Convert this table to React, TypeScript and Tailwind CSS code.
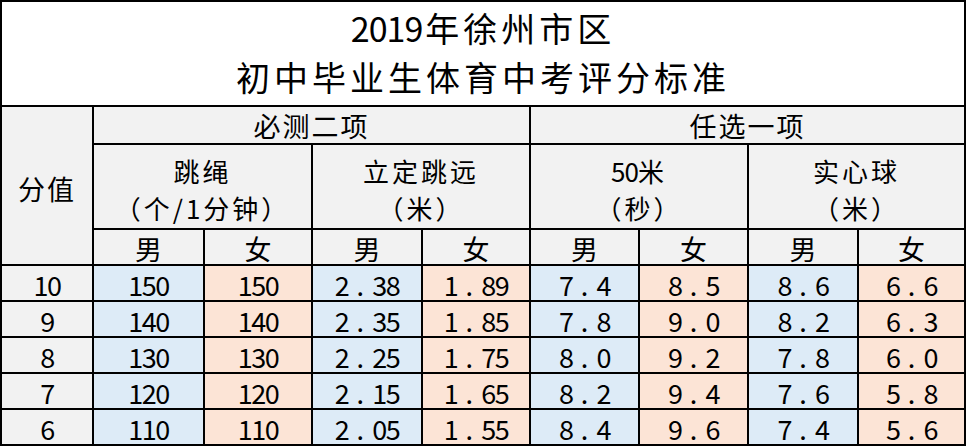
import React from 'react';

const rows = [
  { score: '10', vals: ['150', '150', '2.38', '1.89', '7.4', '8.5', '8.6', '6.6'] },
  { score: '9', vals: ['140', '140', '2.35', '1.85', '7.8', '9.0', '8.2', '6.3'] },
  { score: '8', vals: ['130', '130', '2.25', '1.75', '8.0', '9.2', '7.8', '6.0'] },
  { score: '7', vals: ['120', '120', '2.15', '1.65', '8.2', '9.4', '7.6', '5.8'] },
  { score: '6', vals: ['110', '110', '2.05', '1.55', '8.4', '9.6', '7.4', '5.6'] },
];

const cell = 'border-2 border-black text-center align-middle p-0';
const head = `${cell} bg-[#f2f2f2]`;

function Num({ v }: { v: string }) {
  const [a, b] = v.split('.');
  return (
    <span className="tracking-[-1.5px] whitespace-nowrap">
      {a}
      {b !== undefined && (
        <>
          <span className="inline-block w-[24px] text-center tracking-normal">.</span>
          {b}
        </>
      )}
    </span>
  );
}

function TwoLine({ top, bottom }: { top: React.ReactNode; bottom: string }) {
  return (
    <>
      <div className="leading-[37px] text-[26px] pt-[4px]">{top}</div>
      <div className="leading-[37px] text-[26px]">{bottom}</div>
    </>
  );
}

export default function App() {
  return (
    <div className="w-[967px] h-[447px] bg-white text-black" style={{ fontFamily: '"Noto Sans CJK SC", "Noto Sans", sans-serif' }}>
      <table className="table-fixed border-collapse w-[964px] text-[27px] leading-none">
        <colgroup>
          <col className="w-[92px]" />
          <col className="w-[111px]" />
          <col className="w-[108px]" />
          <col className="w-[110px]" />
          <col className="w-[108px]" />
          <col className="w-[109px]" />
          <col className="w-[109px]" />
          <col className="w-[110px]" />
          <col className="w-[107px]" />
        </colgroup>
        <tbody>
          <tr className="h-[104px]">
            <td colSpan={9} className={`${cell} bg-white text-[34px] tracking-[4px]`}>
              <div className="leading-[49px] pt-[1px]">
                <span className="tracking-[-1px] mr-[3px]">2019</span>年徐州市区
              </div>
              <div className="leading-[49px] pb-[4px]">初中毕业生体育中考评分标准</div>
            </td>
          </tr>
          <tr className="h-[38px]">
            <td rowSpan={3} className={`${head} tracking-[2px] pt-[6px]`}>分值</td>
            <td colSpan={4} className={`${head} tracking-[2px]`}>必测二项</td>
            <td colSpan={4} className={`${head} tracking-[2px]`}>任选一项</td>
          </tr>
          <tr className="h-[85px]">
            <td colSpan={2} className={`${head} tracking-[3px]`}>
              <TwoLine top="跳绳" bottom="（个/1分钟）" />
            </td>
            <td colSpan={2} className={`${head} tracking-[3px]`}>
              <TwoLine top="立定跳远" bottom="（米）" />
            </td>
            <td colSpan={2} className={`${head} tracking-[3px]`}>
              <TwoLine top={<><span className="tracking-[-1px]">50</span>米</>} bottom="（秒）" />
            </td>
            <td colSpan={2} className={`${head} tracking-[3px]`}>
              <TwoLine top="实心球" bottom="（米）" />
            </td>
          </tr>
          <tr className="h-[36px]">
            {['男', '女', '男', '女', '男', '女', '男', '女'].map((g, i) => (
              <td key={i} className={`${head} pt-[3px]`}>{g}</td>
            ))}
          </tr>
          {rows.map(r => (
            <tr key={r.score} className="h-[36px]">
              <td className={`${head} pt-[3px]`}><Num v={r.score} /></td>
              {r.vals.map((v, i) => (
                <td key={i} className={`${cell} pt-[3px] ${i % 2 === 0 ? 'bg-[#ddebf7]' : 'bg-[#fce4d6]'}`}>
                  <Num v={v} />
                </td>
              ))}
            </tr>
          ))}
        </tbody>
      </table>
    </div>
  );
}
